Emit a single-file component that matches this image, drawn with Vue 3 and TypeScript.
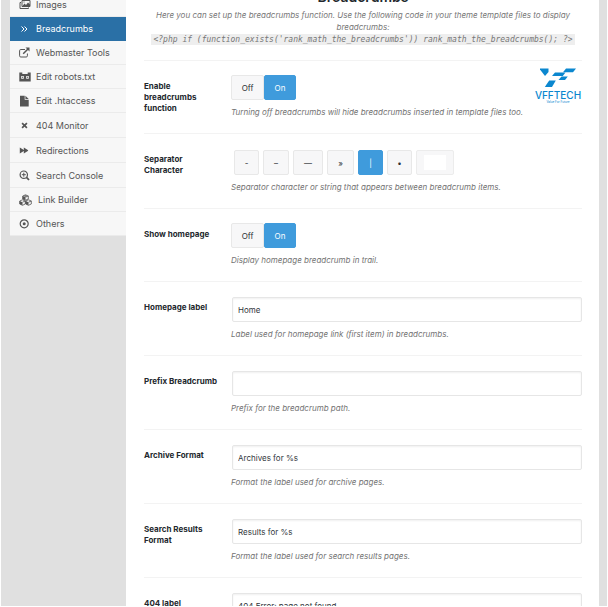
<script setup lang="ts">
import { ref } from 'vue'

interface NavItem {
  label: string
  icon: string
  active?: boolean
}

interface TextField {
  id: string
  label: string
  value: string
  help: string
}

const navItems: NavItem[] = [
  { label: 'Images', icon: 'images' },
  { label: 'Breadcrumbs', icon: 'angles', active: true },
  { label: 'Webmaster Tools', icon: 'external' },
  { label: 'Edit robots.txt', icon: 'robot' },
  { label: 'Edit .htaccess', icon: 'file' },
  { label: '404 Monitor', icon: 'cross' },
  { label: 'Redirections', icon: 'forward' },
  { label: 'Search Console', icon: 'search' },
  { label: 'Link Builder', icon: 'cubes' },
  { label: 'Others', icon: 'target' },
]

const separators: string[] = ['-', '–', '—', '»', '|', '•']

const enabled = ref('On')
const showHome = ref('On')
const separator = ref('|')
const customSeparator = ref('')

const fields = ref<TextField[]>([
  { id: 'home-label', label: 'Homepage label', value: 'Home', help: 'Label used for homepage link (first item) in breadcrumbs.' },
  { id: 'prefix', label: 'Prefix Breadcrumb', value: '', help: 'Prefix for the breadcrumb path.' },
  { id: 'archive', label: 'Archive Format', value: 'Archives for %s', help: 'Format the label used for archive pages.' },
  { id: 'search', label: 'Search Results Format', value: 'Results for %s', help: 'Format the label used for search results pages.' },
  { id: 'not-found', label: '404 label', value: '404 Error: page not found', help: 'Label used for 404 error item in breadcrumbs.' },
])

const phpCode = "<?php if (function_exists('rank_math_the_breadcrumbs')) rank_math_the_breadcrumbs(); ?>"
</script>

<template>
  <div class="page">
    <nav class="sidebar">
      <a v-for="item in navItems" :key="item.label" href="#" class="nav-item" :class="{ active: item.active }">
        <svg v-if="item.icon === 'images'" class="icon" viewBox="0 0 12 12">
          <path d="M3 1.500h8v6H3zM2 3.500H1v6h8.500V8.500" fill="none" stroke="currentColor" />
          <path d="M3.500 7l2-2.500 1.500 1.500 2-2.500 2 2v1.500zM4.500 2.500h1v1h-1z" fill="currentColor" />
        </svg>
        <svg v-else-if="item.icon === 'angles'" class="icon" viewBox="0 0 12 12">
          <path d="M2.500 3.500L5 6 2.500 8.500M5.500 3.500L8 6 5.500 8.500" fill="none" stroke="currentColor" />
        </svg>
        <svg v-else-if="item.icon === 'external'" class="icon" viewBox="0 0 12 12">
          <path d="M6 2.500H1.800A1.200 1.200 0 0 0 .6 3.700v5.100A1.200 1.200 0 0 0 1.800 10h5.400a1.200 1.200 0 0 0 1.200-1.200V6.500" fill="none" stroke="currentColor" />
          <path d="M4.200 6.800L9 2" fill="none" stroke="currentColor" stroke-width="1.500" />
          <path d="M6.500.5h4v4z" fill="currentColor" />
        </svg>
        <svg v-else-if="item.icon === 'robot'" class="icon" viewBox="0 0 12 12">
          <path fill="currentColor" fill-rule="evenodd" d="M.3 1.500h3V3h5.400V1.500h3v9H.3zM2.200 5v2.700h2.600V5zM7.200 5v2.700h2.600V5z" />
          <path fill="currentColor" d="M3 5.800h1v1H3zM8 5.800h1v1H8z" />
        </svg>
        <svg v-else-if="item.icon === 'file'" class="icon" viewBox="0 0 12 12">
          <path fill="currentColor" d="M1 .8h4.700v4h4v6.700H1zM6.400.8l3.300 3.300H6.400z" />
        </svg>
        <svg v-else-if="item.icon === 'cross'" class="icon tall" viewBox="0 0 12 13">
          <path d="M3.100 4.100l4.800 4.800M7.900 4.100L3.100 8.900" stroke="currentColor" stroke-width="1.700" />
        </svg>
        <svg v-else-if="item.icon === 'forward'" class="icon tall" viewBox="0 0 12 13">
          <path fill="currentColor" d="M.8 3.500l4 2.500V3.500l4 2.500.4.500-.4.500-4 2.500V7l-4 2.500z" />
        </svg>
        <svg v-else-if="item.icon === 'search'" class="icon tall" viewBox="0 0 12 13">
          <circle cx="4.800" cy="5.700" r="3.700" fill="none" stroke="currentColor" stroke-width="1.200" />
          <path d="M2.800 5.700h4M4.800 3.700v4" stroke="currentColor" />
          <path d="M7.500 8.400l2.500 2.600" stroke="currentColor" stroke-width="1.800" />
        </svg>
        <svg v-else-if="item.icon === 'cubes'" class="icon wide" viewBox="0 0 14 12">
          <g fill="none" stroke="currentColor" stroke-width=".8" stroke-linejoin="round">
            <path d="M6.500.8L9.300 2v3L6.500 6.200 3.700 5V2z" />
            <path d="M3.500 5.800L6.300 7v3l-2.800 1.300L.7 10V7z" />
            <path d="M9.500 5.800L12.300 7v3L9.500 11.300 6.700 10V7z" />
          </g>
          <path fill="currentColor" d="M3.700 2l2.800 1.200V6.200L3.700 5zM.7 7l2.800 1.200v3.100L.7 10zM6.700 7l2.800 1.200v3.100L6.700 10zM6.500 1.200L8.500 2l-2 .7L4.500 2z" />
          <path d="M6.500 3.200L9.300 2M3.500 8.200L6.300 7M9.500 8.200L12.300 7" fill="none" stroke="currentColor" stroke-width=".8" />
        </svg>
        <svg v-else class="icon" viewBox="0 0 12 12">
          <circle cx="5.200" cy="5.800" r="4" fill="none" stroke="currentColor" stroke-width="1.200" />
          <circle cx="5.200" cy="5.800" r="1.500" fill="currentColor" />
        </svg>
        <span>{{ item.label }}</span>
      </a>
    </nav>

    <main class="panel">
      <header class="intro">
        <h1>Breadcrumbs</h1>
        <p>
          Here you can set up the breadcrumbs function. Use the following code in your theme template files to display
          breadcrumbs:<br /><code>{{ phpCode }}</code>
        </p>
      </header>

      <section class="row row-toggle">
        <h2 id="enable-title" class="row-label">Enable breadcrumbs function</h2>
        <div class="row-body">
          <div class="switch" role="radiogroup" aria-labelledby="enable-title">
            <label v-for="state in ['Off', 'On']" :key="state" class="choice">
              <input v-model="enabled" type="radio" name="enabled" :value="state" />
              <span>{{ state }}</span>
            </label>
          </div>
          <p class="help">Turning off breadcrumbs will hide breadcrumbs inserted in template files too.</p>
        </div>
        <div class="brand">
          <svg class="brand-mark" viewBox="0 0 36 20">
            <g fill="#0b87cf">
              <path d="M0 .5h8.500v3.500L5 8 0 1.500z" />
              <path d="M26 .5h10l-3 3.700H23z" />
              <path d="M15 4.500h10.500L22.800 8H12z" />
              <path d="M21.500 8.500h6.300L25 12h-6.500z" />
              <path d="M9.200 12.500H15.800L12 19H4.800z" />
            </g>
          </svg>
          <span class="brand-name">VFFTECH</span>
          <span class="brand-line">Value For Future</span>
        </div>
      </section>

      <section class="row row-separator">
        <h2 id="separator-title" class="row-label">Separator Character</h2>
        <div class="row-body">
          <div class="separators" role="radiogroup" aria-labelledby="separator-title">
            <label v-for="mark in separators" :key="mark" class="choice">
              <input v-model="separator" type="radio" name="separator" :value="mark" />
              <span>{{ mark }}</span>
            </label>
            <div class="custom">
              <input v-model="customSeparator" type="text" aria-label="Custom separator" />
            </div>
          </div>
          <p class="help">Separator character or string that appears between breadcrumb items.</p>
        </div>
      </section>

      <section class="row row-toggle">
        <h2 id="home-title" class="row-label">Show homepage</h2>
        <div class="row-body">
          <div class="switch" role="radiogroup" aria-labelledby="home-title">
            <label v-for="state in ['Off', 'On']" :key="state" class="choice">
              <input v-model="showHome" type="radio" name="show-home" :value="state" />
              <span>{{ state }}</span>
            </label>
          </div>
          <p class="help">Display homepage breadcrumb in trail.</p>
        </div>
      </section>

      <section v-for="field in fields" :key="field.id" class="row">
        <label class="row-label" :for="field.id">{{ field.label }}</label>
        <div class="row-body">
          <input :id="field.id" v-model="field.value" class="text-input" type="text" />
          <p class="help">{{ field.help }}</p>
        </div>
      </section>
    </main>
  </div>
</template>

<style>
body {
  margin: 0;
  background: #ffffff;
}
</style>

<style scoped>
* {
  box-sizing: border-box;
}

.page {
  display: flex;
  align-items: flex-start;
  height: 100vh;
  overflow: hidden;
  padding: 0 8px 0 9px;
  border: solid #ffffff;
  border-width: 0 1px 1px;
  background: #e0e0e0;
  font-family: Inter, "Liberation Sans", sans-serif;
  font-size: 8px;
  color: #2b2f33;
}

.sidebar {
  flex: none;
  width: 116px;
  margin-top: -7px;
  background: #f7f7f7;
  font-size: 9px;
  line-height: 12px;
}

.nav-item {
  display: flex;
  align-items: center;
  gap: 5px;
  padding: 6px 0 5px 9px;
  border-bottom: 1px solid #ebebeb;
  color: #555555;
  text-decoration: none;
  white-space: nowrap;
}

.nav-item.active {
  background: #2a70a6;
  border-color: #2a70a6;
  color: #ffffff;
}

.icon {
  flex: none;
  width: 12px;
  height: 12px;
}

.icon.tall {
  height: 13px;
}

.icon.wide {
  width: 14px;
}

.panel {
  flex: 1;
  min-width: 0;
  padding: 0 17px 0 18px;
  background: #ffffff;
}

.intro {
  margin-top: -13px;
  padding-bottom: 14px;
  border-bottom: 1px solid #f3f3f3;
  text-align: center;
}

.intro h1 {
  margin: 0 0 2px;
  font-size: 14px;
  line-height: 20px;
  font-weight: 600;
  color: #23282d;
}

.intro p {
  margin: 0;
  line-height: 12px;
  font-style: italic;
  color: #777777;
}

.intro code {
  padding: 1px 2px;
  background: #eeeeee;
  font-family: "DejaVu Sans Mono", monospace;
  font-size: 8px;
  white-space: nowrap;
}

.row {
  position: relative;
  display: flex;
  gap: 9px;
  padding-bottom: 15px;
  border-bottom: 1px solid #f3f3f3;
}

.row-label {
  flex: none;
  width: 78px;
  margin: 0;
  padding-top: 20px;
  font-size: 8px;
  line-height: 11px;
  font-weight: 700;
  color: #23282d;
}

.row-body {
  flex: 1;
  min-width: 0;
  padding-top: 15px;
}

.row-toggle .row-body {
  padding-top: 14px;
}

.row-separator .row-body {
  padding-top: 16px;
}

.help {
  margin: 6px 0 0;
  line-height: 12px;
  font-style: italic;
  color: #737373;
}

.switch {
  display: grid;
  grid-template-columns: 33px 32px;
  height: 25px;
}

.separators {
  display: grid;
  grid-template-columns: 25px 26px 30px 27px 25px 25px 38px;
  gap: 4px;
  height: 25px;
  margin-left: 3px;
}

.choice {
  position: relative;
  display: flex;
}

.choice input {
  position: absolute;
  inset: 0;
  margin: 0;
  opacity: 0;
}

.choice span {
  flex: 1;
  display: flex;
  align-items: center;
  justify-content: center;
  border: 1px solid #e8e8e8;
  border-radius: 2px;
  background: #f7f7f8;
}

.choice input:checked + span {
  border-color: #3f9bdc;
  background: #3f9bdc;
  color: #ffffff;
}

.custom {
  display: flex;
  padding: 4px 7px;
  border: 1px solid #ececec;
  border-radius: 2px;
  background: #f7f7f8;
}

.custom input {
  width: 100%;
  padding: 0 2px;
  border: 0;
  background: #ffffff;
  font: inherit;
}

.text-input {
  display: block;
  width: calc(100% - 1px);
  height: 25px;
  margin-left: 1px;
  padding: 0 5px;
  border: 1px solid #e6e6e6;
  border-radius: 2px;
  background: #ffffff;
  box-shadow: inset 0 1px 2px #f0f0f0;
  font: inherit;
  color: #32373c;
}

.brand {
  position: absolute;
  top: 7px;
  right: -3px;
  display: flex;
  flex-direction: column;
  align-items: center;
  width: 54px;
  color: #0b87cf;
}

.brand-mark {
  width: 36px;
  height: 20px;
}

.brand-name {
  margin-top: 2px;
  font-size: 10px;
  line-height: 10px;
  font-weight: 500;
}

.brand-line {
  font-size: 3px;
  line-height: 4px;
}
</style>
